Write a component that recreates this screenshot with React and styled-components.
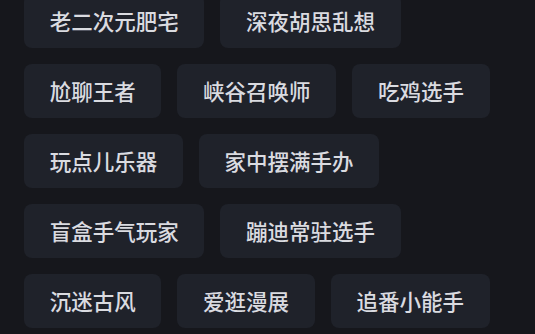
import React from "react";
import styled, { createGlobalStyle } from "styled-components";

const Global = createGlobalStyle`
  html, body {
    margin: 0;
    padding: 0;
    background: #16171c;
    overflow: hidden;
  }
  #root { width: 535px; height: 334px; }
`;

const Page = styled.div`
  width: 535px;
  height: 334px;
  background: #16171c;
  box-sizing: border-box;
  padding: 0 0 0 24px;
  overflow: hidden;
`;

const List = styled.div`
  display: flex;
  flex-direction: column;
  gap: 16px;
  margin-top: -6px;
`;

const Row = styled.div`
  display: flex;
  gap: 16px;
`;

const Chip = styled.div`
  height: 54px;
  padding: 0 25.7px;
  box-sizing: border-box;
  display: flex;
  align-items: center;
  justify-content: center;
  background: #1f222a;
  border-radius: 8px;
  color: #dadbe0;
  font-family: "Noto Sans CJK SC", "Noto Sans", sans-serif;
  font-size: 21.5px;
  font-weight: 500;
  line-height: 1;
  white-space: nowrap;
`;

const rows = [
  ["老二次元肥宅", "深夜胡思乱想"],
  ["尬聊王者", "峡谷召唤师", "吃鸡选手"],
  ["玩点儿乐器", "家中摆满手办"],
  ["盲盒手气玩家", "蹦迪常驻选手"],
  ["沉迷古风", "爱逛漫展", "追番小能手"],
];

export default function App() {
  return (
    <>
      <Global />
      <Page>
        <List>
          {rows.map((r, i) => (
            <Row key={i}>
              {r.map((t) => (
                <Chip key={t}>{t}</Chip>
              ))}
            </Row>
          ))}
        </List>
      </Page>
    </>
  );
}
